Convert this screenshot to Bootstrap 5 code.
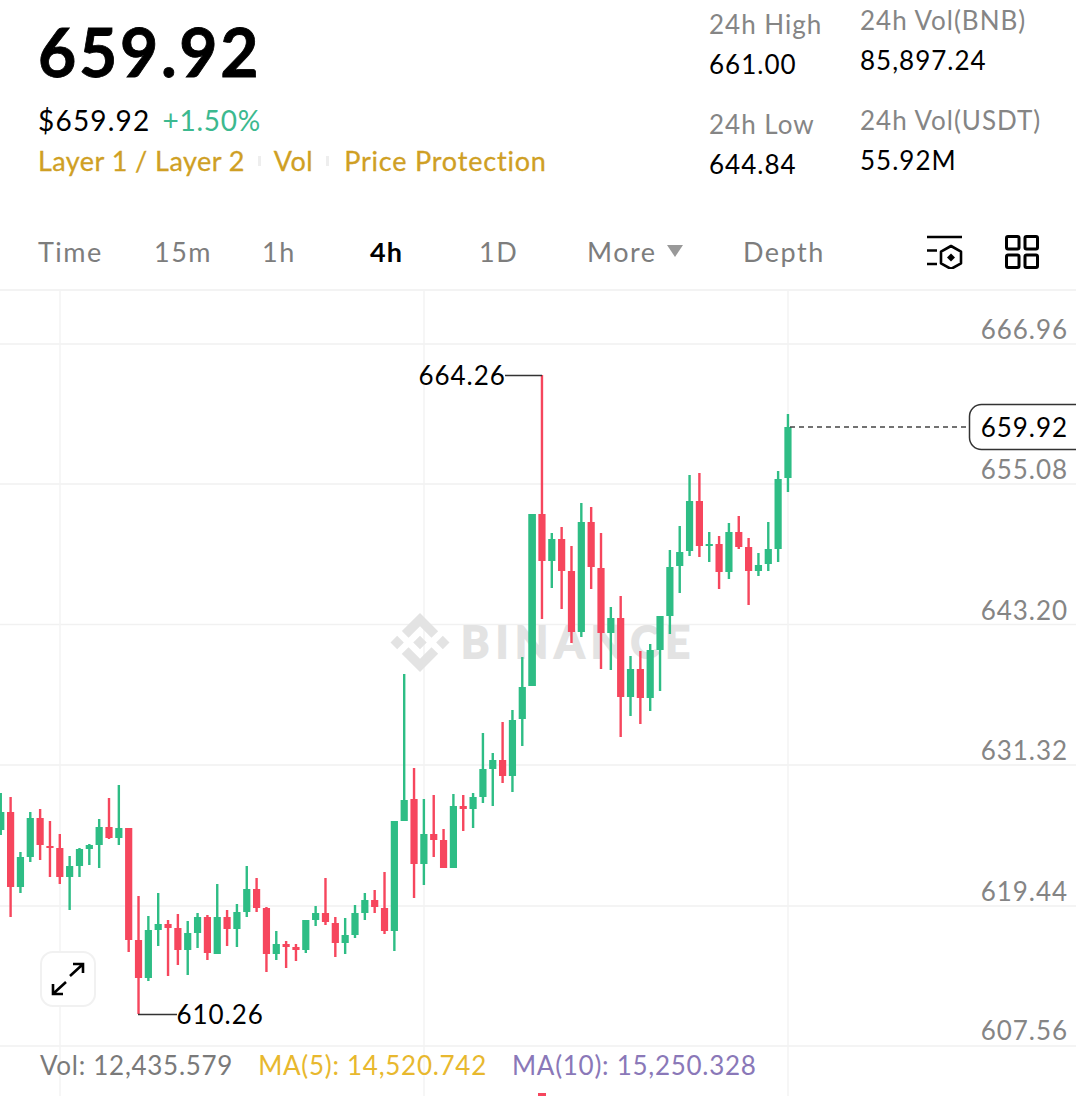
<!DOCTYPE html>
<html lang="en">
<head>
  <meta charset="UTF-8">
  <title>BNB/USDT 4h</title>
  <meta name="viewport" content="width=device-width, initial-scale=1">
  <link href="https://cdn.jsdelivr.net/npm/bootstrap@5.3.0/dist/css/bootstrap.min.css" rel="stylesheet">
  <style>
    body { font-family: Lato, "Noto Sans", sans-serif; background: #fff; color: #000; width: 1076px; height: 1096px; overflow: hidden; }
    .quote-head { height: 220px; }
    .quote-left { padding-left: 38px; width: 709px; }
    .big-price { font-size: 66px; line-height: 1; font-weight: 700; padding-top: 19px; letter-spacing: 2.7px; -webkit-text-stroke: .8px #000; }
    .sub-price { font-size: 28px; line-height: 34px; margin-top: 18px; gap: 12px; letter-spacing: 1.2px; }
    .pct-up { color: #3cb98f; letter-spacing: .75px; }
    .tag-row { font-size: 27px; line-height: 32px; color: #cf9f24; margin-top: 8px; letter-spacing: .45px; gap: 13px; -webkit-text-stroke: .3px #cf9f24; }
    .tag-sep { width: 3px; height: 10px; background: #eee; }
    .tag-long { letter-spacing: .8px; margin-left: 2px; }
    .stat-col { font-size: 26px; line-height: 40px; letter-spacing: 1px; }
    .stat-col.first { width: 151px; padding-top: 4px; }
    .stat-label { color: #858585; }
    .stat-gap { margin-top: 20px; }
    .tf-tabs { height: 71px; padding-left: 38px; padding-bottom: 4px; border-bottom: 2px solid #f3f3f3; font-size: 27px; letter-spacing: 1.5px; color: #7d7d7d; }
    .tf-cell { width: 108px; }
    .tf-cell.time { width: 116px; }
    .tf-cell.more { width: 156px; }
    .tf-cell.active { width: 109px; color: #000; font-weight: 700; letter-spacing: 1.1px; }
    .tf-icons { margin-left: auto; gap: 42px; padding-right: 37px; margin-bottom: 2px; }
    .more-caret { width: 0; height: 0; margin-left: 10px; margin-bottom: 3px; border-left: 8px solid transparent; border-right: 8px solid transparent; border-top: 12px solid #999; }
    .chart-box { height: 805px; }
    .chart-box svg.plot { display: block; }
    .plot text { font-family: Lato, "Noto Sans", sans-serif; font-size: 26px; letter-spacing: .95px; }
    .plot text.mark-text { font-size: 43px; font-weight: 700; letter-spacing: 0; }
    .expand-btn { left: 40px; top: 660px; width: 56px; height: 56px; border: 2px solid #f1f1f1; border-radius: 13px; background: #fff; }
    .vol-legend { left: 40px; top: 757px; font-size: 26px; line-height: 34px; gap: 25px; letter-spacing: .72px; }
    .vol-grey { color: #7a7a7a; }
    .vol-ma5 { color: #e8b82e; }
    .vol-ma10 { color: #8a78b8; }
  </style>
</head>
<body>
  <div class="quote-head d-flex">
    <div class="quote-left">
      <div class="big-price">659.92</div>
      <div class="sub-price d-flex">
        <span>$659.92</span>
        <span class="pct-up">+1.50%</span>
      </div>
      <div class="tag-row d-flex align-items-center">
        <span>Layer 1 / Layer 2</span>
        <span class="tag-sep"></span>
        <span>Vol</span>
        <span class="tag-sep"></span>
        <span class="tag-long">Price Protection</span>
      </div>
    </div>
    <div class="stat-col first">
      <div class="stat-label">24h High</div>
      <div>661.00</div>
      <div class="stat-label stat-gap">24h Low</div>
      <div>644.84</div>
    </div>
    <div class="stat-col">
      <div class="stat-label">24h Vol(BNB)</div>
      <div>85,897.24</div>
      <div class="stat-label stat-gap">24h Vol(USDT)</div>
      <div>55.92M</div>
    </div>
  </div>

  <div class="tf-tabs d-flex align-items-center">
    <div class="tf-cell time">Time</div>
    <div class="tf-cell">15m</div>
    <div class="tf-cell">1h</div>
    <div class="tf-cell active">4h</div>
    <div class="tf-cell">1D</div>
    <div class="tf-cell more d-flex align-items-center"><span>More</span><span class="more-caret"></span></div>
    <div class="tf-cell">Depth</div>
    <div class="tf-icons d-flex align-items-center">
      <svg width="36" height="34" viewBox="0 0 36 34" fill="none" stroke="#000" stroke-width="2.6">
        <path d="M0 2h35M0 15.500h10M0 29h10"/>
        <path d="M24 11l10 5.700v11.600l-10 5.700-10-5.700v-11.600z" stroke-linejoin="round"/>
        <path d="M24 18.500l4 4-4 4-4-4z" fill="#000" stroke="none"/>
      </svg>
      <svg width="34" height="34" viewBox="0 0 34 34" fill="none" stroke="#000" stroke-width="3">
        <rect x="1.500" y="1.500" width="12.500" height="12.500" rx="1.500"/>
        <rect x="20" y="1.500" width="12.500" height="12.500" rx="1.500"/>
        <rect x="1.500" y="20" width="12.500" height="12.500" rx="1.500"/>
        <rect x="20" y="20" width="12.500" height="12.500" rx="1.500"/>
      </svg>
    </div>
  </div>

  <div class="chart-box position-relative">
    <svg class="plot" id="plot" width="1076" height="805" viewBox="0 291 1076 805"></svg>
    <div class="expand-btn position-absolute d-flex align-items-center justify-content-center">
      <svg width="38" height="38" viewBox="0 0 38 38" fill="none" stroke="#000" stroke-width="2.600">
        <path d="M21 16L33 5M24 4h10v9"/>
        <path d="M17 22L5 33M14 34H4V24"/>
      </svg>
    </div>
    <div class="vol-legend position-absolute d-flex">
      <span class="vol-grey">Vol: 12,435.579</span>
      <span class="vol-ma5">MA(5): 14,520.742</span>
      <span class="vol-ma10">MA(10): 15,250.328</span>
    </div>
  </div>

  <script src="https://cdn.jsdelivr.net/npm/bootstrap@5.3.0/dist/js/bootstrap.bundle.min.js"></script>
  <script>
    // [colour, wick top, wick bottom, body top, body bottom], in page pixels
    const candles = [
      ['g',793,835,812,830],['r',797,917,812,887],['g',852,893,857,887],['g',812,862,818,857],
      ['r',809,860,818,845],['r',821,877,846,848],['r',834,884,848,877],['g',856,910,866,877],
      ['g',848,877,849,866],['g',844,865,845,849],['g',819,868,827,845],['r',798,839,827,838],
      ['g',785,845,828,838],['r',828,952,828,940],['r',896,1014,940,978],['g',916,981,930,978],
      ['g',893,946,924,930],['r',920,976,924,928],['r',914,965,928,950],['g',921,975,933,950],
      ['g',913,948,917,933],['r',915,960,917,953],['g',884,954,917,954],['r',910,946,917,929],
      ['g',904,947,912,929],['g',866,917,889,912],['r',878,912,889,908],['r',907,972,908,954],
      ['g',931,960,944,954],['r',941,968,944,947],['r',944,961,947,950],['g',920,953,920,950],
      ['g',906,926,913,920],['r',878,925,913,922],['r',917,957,923,943],['g',918,954,935,943],
      ['g',905,938,913,935],['g',893,920,900,913],['r',890,913,900,907],['r',872,934,908,931],
      ['g',821,951,821,931],['g',674,821,800,821],['r',768,898,799,864],['g',799,885,834,864],
      ['r',795,857,834,840],['r',829,868,840,868],['g',794,868,806,868],['r',795,831,806,809],
      ['g',793,828,797,809],['g',733,803,769,797],['g',753,806,760,769],['r',722,783,760,776],
      ['g',710,792,720,776],['g',657,746,687,719],['g',514,686,514,686],['r',375,619,514,561],
      ['g',533,588,539,561],['r',527,609,539,571],['r',546,643,571,632],['g',503,637,522,632],
      ['r',507,589,522,567],['r',533,669,568,633],['g',607,670,618,633],['r',596,737,618,697],
      ['g',656,716,669,697],['r',651,724,669,698],['g',644,711,650,698],['g',616,691,616,650],
      ['g',550,634,567,616],['g',526,593,552,566],['g',475,556,501,551],['r',473,557,501,546],
      ['g',532,562,544,546],['r',536,589,544,572],['g',523,579,532,572],['r',516,549,532,547],
      ['r',538,605,547,571],['g',553,576,565,571],['g',522,571,549,564],['g',471,562,479,549],
      ['g',414,492,427,478]
    ];
    const colours = { g: '#2ebd85', r: '#f6465d' };
    let svg = '';

    // grid
    [344, 484, 624.5, 765, 906, 1046].forEach(function(y) {
      svg += '<line x1="0" x2="1076" y1="' + y + '" y2="' + y + '" stroke="#f1f1f1" stroke-width="1.500"/>';
    });
    [60, 424, 788].forEach(function(x) {
      svg += '<line y1="291" y2="1096" x1="' + x + '" x2="' + x + '" stroke="#f3f3f3" stroke-width="1.500"/>';
    });

    // watermark
    svg += '<g fill="#e3e3e3" transform="translate(390.500 613) scale(.466)">' +
      '<path d="M38.730 53.200l24.590-24.580 24.600 24.600 14.300-14.310L63.320 0 24.430 38.890z"/>' +
      '<path d="M0 63.310l14.300-14.310 14.310 14.310-14.310 14.300z"/>' +
      '<path d="M38.730 73.410l24.590 24.590 24.600-24.600 14.310 14.290-38.900 38.910-38.910-38.880-.02-.02z"/>' +
      '<path d="M98 63.310l14.300-14.310 14.310 14.300-14.310 14.320z"/>' +
      '<path d="M77.830 63.300L63.320 48.780 52.590 59.510l-1.240 1.230-2.540 2.540 14.510 14.500 14.510-14.470z"/></g>';
    svg += '<text class="mark-text" x="461" y="658" fill="#e3e3e3" stroke="#e3e3e3" stroke-width="1.800" textLength="229">BINANCE</text>';

    candles.forEach(function(c, i) {
      const x = 0.76 + 9.84 * i;
      const col = colours[c[0]];
      svg += '<rect x="' + (x - 1.2) + '" y="' + c[1] + '" width="2.400" height="' + (c[2] - c[1]) + '" fill="' + col + '"/>';
      svg += '<rect x="' + (x - 3.6) + '" y="' + c[3] + '" width="7.200" height="' + Math.max(c[4] - c[3], 2) + '" fill="' + col + '"/>';
    });
    // body of the tall candle at 532 runs the whole height
    svg += '<rect x="' + (0.76 + 9.84 * 54 - 3.6) + '" y="514" width="7.200" height="172" fill="#2ebd85"/>';
    svg += '<rect x="538" y="1093" width="8" height="3" fill="#f6465d"/>';

    // high / low markers
    svg += '<path d="M505 375.500H542M138 1014.500H177" stroke="#333" stroke-width="1.500" fill="none"/>';
    svg += '<text x="418.500" y="385" fill="#000">664.26</text>';
    svg += '<text x="176.500" y="1024" fill="#000">610.26</text>';

    // axis
    [['666.96',339],['655.08',479],['643.20',620],['631.32',760],['619.44',901],['607.56',1040]].forEach(function(t) {
      svg += '<text x="1068" y="' + t[1] + '" text-anchor="end" fill="#858585">' + t[0] + '</text>';
    });

    // last price
    svg += '<line x1="790" x2="969" y1="427" y2="427" stroke="#444" stroke-width="1.300" stroke-dasharray="5 4"/>';
    svg += '<rect x="969.500" y="404.500" width="120" height="45" rx="12" fill="#fff" stroke="#333" stroke-width="1.500"/>';
    svg += '<text x="1068" y="437" text-anchor="end" fill="#000">659.92</text>';

    document.getElementById('plot').innerHTML = svg;
  </script>
</body>
</html>
